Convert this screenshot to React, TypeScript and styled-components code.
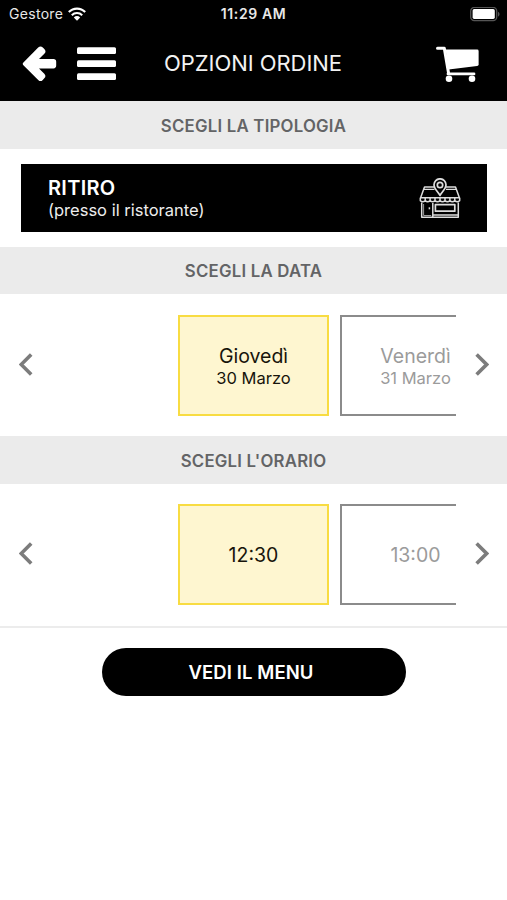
import React from "react";
import styled, { createGlobalStyle } from "styled-components";

const GlobalStyle = createGlobalStyle`
  * { box-sizing: border-box; }
  body {
    margin: 0;
    background: #fff;
    color: #111;
    font-family: Inter, "Liberation Sans", sans-serif;
  }
  button { font: inherit; color: inherit; border: 0; padding: 0; background: none; }
  svg { display: block; }
`;

const Screen = styled.main`
  width: 507px;
  height: 900px;
  display: flex;
  flex-direction: column;
  overflow: hidden;
  background: #fff;
`;

const StatusBar = styled.div`
  height: 28px;
  flex: none;
  display: grid;
  grid-template-columns: 1fr auto 1fr;
  align-items: center;
  padding: 0 7px 0 9px;
  background: #000;
  color: #e8e8e8;
  font-size: 14px;
  line-height: 28px;
`;

const Carrier = styled.div`
  display: flex;
  align-items: center;
  gap: 5px;
  letter-spacing: 0.3px;
`;

const Clock = styled.div`
  padding-right: 2px;
  font-weight: 600;
  letter-spacing: 0.6px;
`;

const BatterySlot = styled.div`
  justify-self: end;
`;

const Header = styled.header`
  height: 73px;
  flex: none;
  display: grid;
  grid-template-columns: 116px 1fr 116px;
  align-items: center;
  padding: 0 0 1px;
  background: #000;
  color: #fff;
`;

const HeaderActions = styled.div`
  display: flex;
  align-items: center;
  gap: 20px;
  padding-left: 22px;
`;

const Title = styled.h1`
  margin: 0;
  padding: 0 1px 2px 0;
  text-align: center;
  font-size: 22px;
  font-weight: 400;
  line-height: 28px;
  letter-spacing: -0.05px;
  color: #f2f2f2;
`;

const CartButton = styled.button`
  justify-self: end;
  margin-right: 28px;
`;

const SectionTitle = styled.h2<{ $height: number }>`
  height: ${(p) => p.$height}px;
  flex: none;
  margin: 0;
  padding-top: 1px;
  display: flex;
  align-items: center;
  justify-content: center;
  background: #ebebeb;
  color: #636466;
  font-size: 16.8px;
  font-weight: 600;
  letter-spacing: 0.22px;
`;

const TypeSection = styled.section`
  height: 98px;
  flex: none;
  padding: 15px 20px 0 21px;
`;

const TypeOption = styled.button`
  width: 100%;
  height: 68px;
  display: flex;
  align-items: center;
  justify-content: space-between;
  padding: 0 26px 0 27px;
  background: #000;
  color: #fff;
  text-align: left;
`;

const TypeName = styled.div`
  font-size: 20px;
  font-weight: 600;
  line-height: 24px;
  letter-spacing: 0.3px;
`;

const TypeNote = styled.div`
  font-size: 16.5px;
  line-height: 21px;
  color: #ededed;
`;

const Picker = styled.section<{ $height: number; $top: number }>`
  height: ${(p) => p.$height}px;
  flex: none;
  display: grid;
  grid-template-columns: 51px 405px 51px;
  padding-top: ${(p) => p.$top}px;
`;

const Arrow = styled.button`
  height: 99px;
  display: flex;
  align-items: center;
  justify-content: center;
  color: #7c7c7c;
`;

const Track = styled.div`
  display: flex;
  gap: 11px;
  padding-left: 127px;
  overflow: hidden;
`;

const Card = styled.button<{ $selected?: boolean }>`
  width: 151px;
  height: 101px;
  flex: none;
  display: flex;
  flex-direction: column;
  align-items: center;
  justify-content: center;
  padding-top: 1px;
  border: 2px solid ${(p) => (p.$selected ? "#f8dc42" : "#8b8b8b")};
  background: ${(p) => (p.$selected ? "#fef6d0" : "#fff")};
  color: ${(p) => (p.$selected ? "#17140b" : "#9b9b9b")};
`;

const CardMain = styled.span`
  font-size: 19.5px;
  line-height: 24px;
`;

const CardSub = styled.span`
  font-size: 16.5px;
  line-height: 21px;
`;

const Footer = styled.footer`
  display: flex;
  justify-content: center;
  padding: 20px 0 0 1px;
  border-top: 2px solid #ececec;
`;

const MenuButton = styled.button`
  width: 304px;
  height: 48px;
  padding-right: 6px;
  border-radius: 24px;
  background: #000;
  color: #fff;
  font-size: 18.5px;
  font-weight: 600;
  letter-spacing: 0.1px;
`;

const Wifi = () => (
  <svg width="18" height="14" viewBox="0 0 18 14" fill="none" stroke="#fff" strokeWidth="2.1">
    <path d="M.8 5.1C5.4.4 12.6.4 17.2 5.1M3.8 8.2c2.9-2.9 7.5-2.9 10.4 0" />
    <path d="M5.8 10.4c1.8-1.8 4.6-1.8 6.4 0L9 13.7z" fill="#fff" stroke="none" />
  </svg>
);

const Battery = () => (
  <svg width="30" height="15" viewBox="0 0 30 15">
    <rect x=".7" y=".4" width="26" height="13.2" rx="3.6" fill="none" stroke="#555" strokeWidth="1.3" />
    <rect x="2.6" y="2.1" width="22.2" height="9.8" rx="1.6" fill="#fff" />
    <path d="M28 4.7v4.8c2-.8 2-4 0-4.8z" fill="#555" />
  </svg>
);

const BackIcon = () => (
  <svg width="35" height="37" viewBox="0 0 35 37">
    <path
      d="M1.4 16.4 16.2 1.6a3.2 3.2 0 0 1 4.6 0l1.5 1.5a3.2 3.2 0 0 1 0 4.6L17 13h14.4a2.8 2.8 0 0 1 2.8 2.8v3.8a2.8 2.8 0 0 1-2.8 2.8H17l5.3 5.4a3.2 3.2 0 0 1 0 4.5l-1.5 1.6a3.2 3.2 0 0 1-4.6 0L1.4 19.3a2.1 2.1 0 0 1 0-2.9z"
      fill="#fff"
    />
  </svg>
);

const BarsIcon = () => (
  <svg width="40" height="34" viewBox="0 0 40 34" fill="#fff">
    <rect x="0" y=".2" width="39" height="6.8" rx="1.5" />
    <rect x="0" y="13.3" width="39" height="6.8" rx="1.5" />
    <rect x="0" y="26.3" width="39" height="6.8" rx="1.5" />
  </svg>
);

const CartIcon = () => (
  <svg width="43" height="37" viewBox="0 0 43 37">
    <path d="M1.5 2.2h6.8l4.2 24.5" fill="none" stroke="#fff" strokeWidth="3" strokeLinecap="round" strokeLinejoin="round" />
    <path d="M9.5 3.6h31.7q1.4 0 1.4 1.4v13.2q0 1.5-1.5 1.7L12.6 23.4z" fill="#fff" />
    <path d="M12 27.9h26" stroke="#fff" strokeWidth="2.8" strokeLinecap="round" />
    <circle cx="13" cy="32.7" r="3.3" fill="#fff" />
    <circle cx="36" cy="32.7" r="3.3" fill="#fff" />
  </svg>
);

const StoreIcon = () => (
  <svg width="42" height="41" viewBox="0 0 42 41" fill="none" stroke="#ddd" strokeWidth="1.5" strokeLinejoin="round">
    <path d="M15 9H5.5L1.6 19.8h38.8L36.5 9H27" />
    <path d="M5 11.4h10.5M27 11.4h10" strokeWidth="1.2" />
    <path d="M1.3 19.8v2.8q2.45 2.4 4.9 0 2.45 2.4 4.9 0 2.45 2.4 4.9 0 2.5 2.4 5 0 2.5 2.4 5 0 2.45 2.4 4.9 0 2.45 2.4 4.9 0 2.45 2.4 4.9 0v-2.8M6.2 20v3M11.1 20v3M16 20v3M21 20v3M26 20v3M30.9 20v3M35.8 20v3" />
    <path d="M2.7 24.5v14.8h36.6V24.5M13.8 25v14M13.8 37h25.5" />
    <path d="M16.4 26.6h19.4v6.6H16.4z" strokeWidth="1.7" />
    <path d="M4.6 26v11.5h7.6" strokeWidth=".7" />
    <path d="M10.4 29.3v2" />
    <path d="M21 17.5c-1.4-3.1-6-6.4-6-10.7a6 6 0 0 1 12 0c0 4.3-4.6 7.6-6 10.7z" fill="#000" strokeWidth="1.7" />
    <circle cx="21" cy="7" r="2.7" strokeWidth="1.7" />
  </svg>
);

const Chevron = ({ right = false }: { right?: boolean }) => (
  <svg width="14" height="23" viewBox="0 0 14 23" fill="none" stroke="currentColor" strokeWidth="3.6">
    <path d={right ? "M1.6 1.5 11.6 11.5 1.6 21.5" : "M12.2 1.5 2.2 11.5 12.2 21.5"} />
  </svg>
);

type Choice = { main: string; sub?: string };

const days: Choice[] = [
  { main: "Giovedì", sub: "30 Marzo" },
  { main: "Venerdì", sub: "31 Marzo" },
];
const times: Choice[] = [{ main: "12:30" }, { main: "13:00" }];

const ChoicePicker = ({ items, height, top }: { items: Choice[]; height: number; top: number }) => (
  <Picker $height={height} $top={top}>
    <Arrow aria-label="Precedente"><Chevron /></Arrow>
    <Track>
      {items.map((item, i) => (
        <Card key={item.main} $selected={i === 0}>
          <CardMain>{item.main}</CardMain>
          {item.sub && <CardSub>{item.sub}</CardSub>}
        </Card>
      ))}
    </Track>
    <Arrow aria-label="Successivo"><Chevron right /></Arrow>
  </Picker>
);

export default function App() {
  return (
    <Screen>
      <GlobalStyle />
      <StatusBar>
        <Carrier>Gestore <Wifi /></Carrier>
        <Clock>11:29 AM</Clock>
        <BatterySlot><Battery /></BatterySlot>
      </StatusBar>
      <Header>
        <HeaderActions>
          <button aria-label="Indietro"><BackIcon /></button>
          <button aria-label="Menu"><BarsIcon /></button>
        </HeaderActions>
        <Title>OPZIONI ORDINE</Title>
        <CartButton aria-label="Carrello"><CartIcon /></CartButton>
      </Header>
      <SectionTitle $height={48}>SCEGLI LA TIPOLOGIA</SectionTitle>
      <TypeSection>
        <TypeOption>
          <div>
            <TypeName>RITIRO</TypeName>
            <TypeNote>(presso il ristorante)</TypeNote>
          </div>
          <StoreIcon />
        </TypeOption>
      </TypeSection>
      <SectionTitle $height={47}>SCEGLI LA DATA</SectionTitle>
      <ChoicePicker items={days} height={142} top={21} />
      <SectionTitle $height={48}>SCEGLI L'ORARIO</SectionTitle>
      <ChoicePicker items={times} height={142} top={20} />
      <Footer>
        <MenuButton>VEDI IL MENU</MenuButton>
      </Footer>
    </Screen>
  );
}
